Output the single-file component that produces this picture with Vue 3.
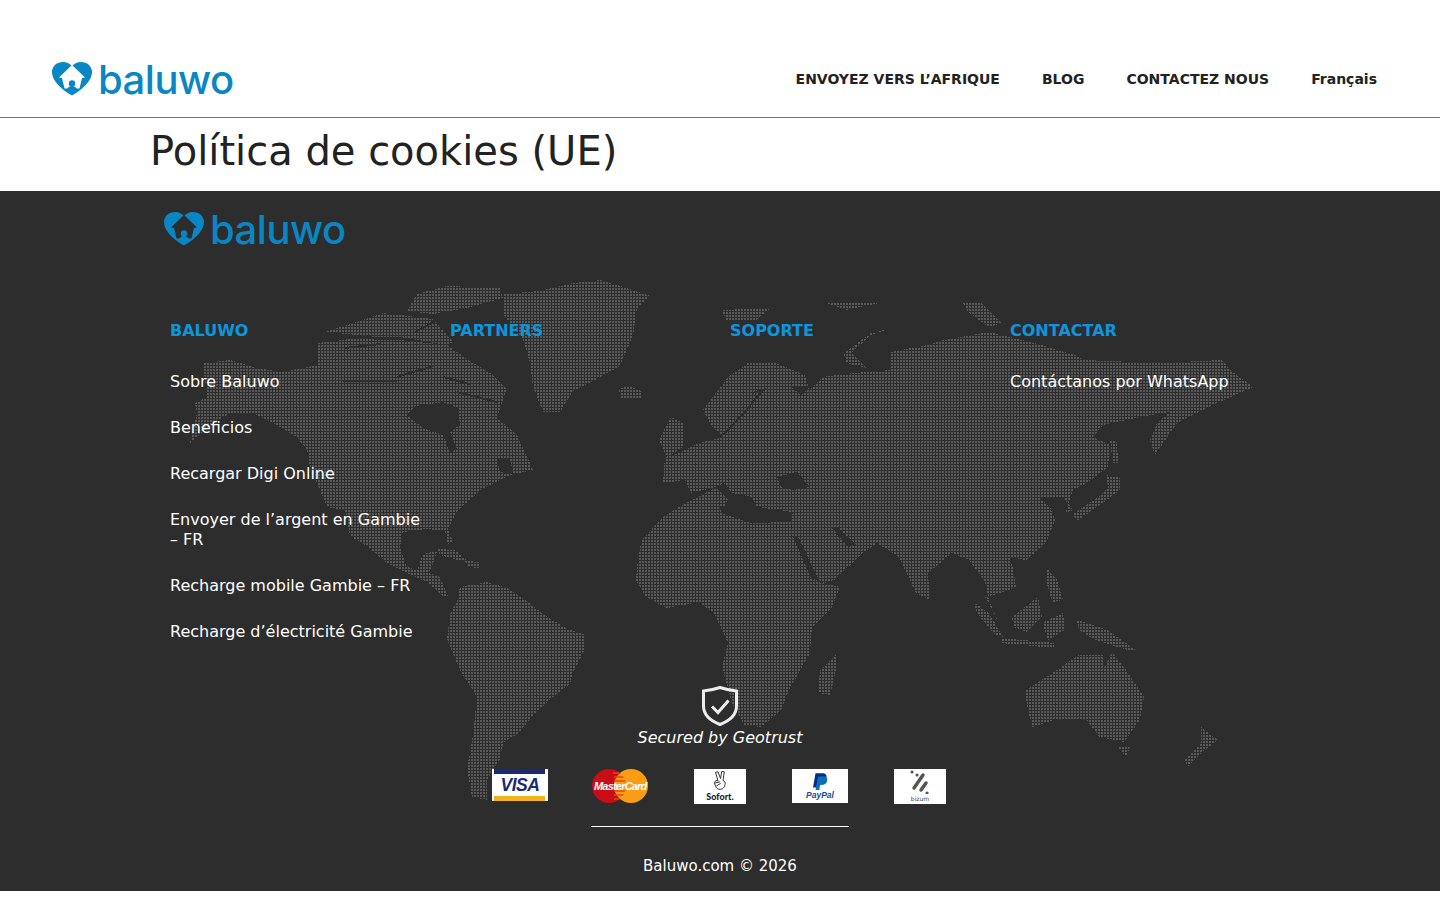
<script setup>
const navLinks = ["ENVOYEZ VERS L’AFRIQUE", "BLOG", "CONTACTEZ NOUS", "Français"];

const columns = [
  {
    title: "BALUWO",
    links: [
      "Sobre Baluwo",
      "Beneficios",
      "Recargar Digi Online",
      "Envoyer de l’argent en Gambie – FR",
      "Recharge mobile Gambie – FR",
      "Recharge d’électricité Gambie",
    ],
  },
  { title: "PARTNERS", links: [] },
  { title: "SOPORTE", links: [] },
  { title: "CONTACTAR", links: ["Contáctanos por WhatsApp"] },
];

// continents, traced in page coordinates from the footer map
const land = [
  // north america
  "203,363 230,360 257,368 283,372 317,365 318,343 350,339 400,340 447,345 470,361 490,373 507,389 497,418 517,435 533,470 513,474 500,480 482,489 457,511 448,529 453,542 448,544 445,531 427,529 403,532 400,546 407,567 417,570 423,554 437,551 432,567 428,573 440,577 448,596 443,596 427,582 407,573 387,563 367,546 350,536 345,510 327,507 310,467 307,450 297,437 273,423 253,413 230,413 213,423 190,443 197,413 195,403 207,397",
  // arctic canada
  "325,332 357,322 383,313 433,319 453,342 447,345 400,337 377,337 357,335",
  "417,294 447,286 500,288 503,298 467,308 433,314 407,311",
  // greenland
  "503,294 540,291 573,283 600,280 627,288 650,296 637,308 633,335 620,366 593,381 573,391 560,412 543,412 533,387 530,363 523,339 503,314",
  // iceland
  "618,389 630,386 643,392 640,399 622,399",
  // caribbean
  "437,549 455,550 470,563 458,560 440,555",
  "466,561 480,562 480,568 468,567",
  // south america
  "460,587 487,582 507,588 527,601 543,614 567,629 585,635 585,649 573,673 570,684 553,697 533,715 520,732 503,743 500,759 487,780 487,800 472,797 467,769 473,735 477,697 460,670 447,639 450,614 457,601",
  // africa
  "638,557 642,540 663,517 679,507 718,503 722,513 752,523 791,522 793,537 806,563 818,582 840,587 832,607 812,627 810,653 789,690 781,710 761,727 744,725 732,703 722,667 728,643 714,613 699,602 667,608 646,597 636,580",
  "836,655 836,670 830,695 818,693 820,670",
  // eurasia
  "663,483 685,480 691,493 679,507 718,505 752,525 793,537 806,563 814,577 824,583 834,580 863,553 877,543 899,557 916,593 930,600 928,573 952,553 969,560 985,582 989,600 1003,633 994,613 985,597 1001,593 1016,587 1014,573 1010,557 1026,560 1046,543 1055,520 1050,507 1038,497 1063,497 1073,510 1065,513 1073,490 1087,483 1108,467 1110,445 1093,437 1103,425 1140,417 1170,412 1157,423 1150,440 1155,455 1177,423 1217,403 1253,387 1230,370 1222,360 1161,363 1083,360 1075,355 1034,343 989,332 944,340 928,345 891,352 891,370 854,373 822,377 810,390 805,375 773,362 748,363 728,377 703,410 712,427 724,437 699,443 679,453 665,457",
  // uk and ireland
  "671,417 683,423 683,447 667,457 659,440",
  // arctic islands
  "722,310 771,308 756,320 726,320",
  "822,302 879,303 846,310",
  "963,303 981,302 1001,323 989,327 969,313",
  "844,353 871,333 893,328 871,335 851,353 867,368 846,363",
  // japan and sakhalin
  "1106,475 1120,478 1120,490 1100,505 1078,520 1072,515 1098,497 1108,487",
  "1110,440 1117,442 1118,463 1113,463",
  // south east asia
  "973,602 989,613 1003,637 995,635 977,613",
  "1001,638 1054,643 1054,648 1001,643",
  "1012,617 1038,597 1042,617 1026,632 1014,627",
  "1042,623 1063,613 1065,630 1048,640",
  "1046,567 1057,580 1063,600 1052,602 1046,580",
  "1077,620 1107,630 1136,650 1128,650 1095,640 1079,630",
  // oceania
  "1026,690 1054,672 1079,655 1103,655 1103,670 1112,652 1126,670 1144,697 1140,720 1124,742 1099,737 1087,720 1054,720 1032,727 1026,700",
  "1118,747 1130,747 1126,757",
  "1201,727 1218,740 1201,753 1187,767 1185,760 1201,743",
];

const water = [
  // hudson bay
  "407,415 415,406 443,402 458,408 460,425 450,432 457,449 450,453 443,435 423,428",
  // gulf of st lawrence
  "497,459 510,458 513,474 500,472",
  // mediterranean
  "679,507 691,493 716,487 728,500 720,513 752,523 791,522 793,512 757,507 752,497 732,493 724,483",
  // black sea
  "777,477 797,472 810,487 793,490 781,487",
  // red sea
  "793,537 798,537 818,578 812,580",
  // persian gulf
  "832,528 838,528 857,545 848,547",
  // white sea
  "791,387 810,387 801,395",
];

const channels = [
  "343,381 397,381",
  "397,377 433,366",
  "345,348 380,344",
  "415,332 450,313",
  "443,377 470,384",
  "457,392 497,402",
  "752,393 763,390 744,413 728,430 720,437",
];
</script>

<template>
  <div class="page">
    <header class="site-header">
      <div class="logo">
        <svg class="logo-mark" viewBox="0 0 40 34" width="40" height="34">
          <path class="heart" d="M20 33.500C14 30 0 21 0 10 0 4 5 0 11 0c4 0 7 2 9 4 2-2 5-4 9-4 6 0 11 4 11 10 0 11-14 20-20 23.500z" />
          <path class="house-light" d="M20 3 7 15.500l3 .5 2.500 10.500h15L30 16l3-.5z" />
          <circle class="heart" cx="20" cy="21.500" r="3.200" />
          <path class="heart" d="M15 28c.5-2.500 2.500-4 5-4s4.500 1.500 5 4l-5 2z" />
        </svg>
        <span class="logo-text">baluwo</span>
      </div>
      <nav class="main-nav">
        <a v-for="link in navLinks" :key="link" href="#">{{ link }}</a>
      </nav>
    </header>

    <section class="page-title">
      <h1>Política de cookies (UE)</h1>
    </section>

    <footer class="site-footer">
      <svg class="world-map" width="1440" height="700" viewBox="0 191 1440 700" aria-hidden="true">
        <defs>
          <pattern id="dots" x="0" y="0" width="3" height="3" patternUnits="userSpaceOnUse">
            <rect width="2" height="2" fill="#595959" />
          </pattern>
          <mask id="land" maskUnits="userSpaceOnUse" x="0" y="191" width="1440" height="700">
            <g shape-rendering="crispEdges">
              <polygon v-for="(pts, i) in land" :key="'l' + i" :points="pts" fill="#fff" />
              <polygon v-for="(pts, i) in water" :key="'w' + i" :points="pts" fill="#000" />
              <polyline v-for="(pts, i) in channels" :key="'c' + i" :points="pts" fill="none" stroke="#000" stroke-width="2" />
            </g>
          </mask>
        </defs>
        <rect x="0" y="191" width="1440" height="700" fill="url(#dots)" mask="url(#land)" />
      </svg>

      <div class="footer-inner">
        <div class="logo footer-logo">
          <svg class="logo-mark" viewBox="0 0 40 34" width="40" height="34">
            <path class="heart" d="M20 33.500C14 30 0 21 0 10 0 4 5 0 11 0c4 0 7 2 9 4 2-2 5-4 9-4 6 0 11 4 11 10 0 11-14 20-20 23.500z" />
            <path class="house-dark" d="M20 3 7 15.500l3 .5 2.500 10.500h15L30 16l3-.5z" />
            <circle class="heart" cx="20" cy="21.500" r="3.200" />
            <path class="heart" d="M15 28c.5-2.500 2.500-4 5-4s4.500 1.500 5 4l-5 2z" />
          </svg>
          <span class="logo-text">baluwo</span>
        </div>

        <div class="footer-columns">
          <div v-for="col in columns" :key="col.title" class="footer-col">
            <h4>{{ col.title }}</h4>
            <a v-for="link in col.links" :key="link" href="#">{{ link }}</a>
          </div>
        </div>

        <div class="secured">
          <svg viewBox="0 0 36 40" width="36" height="40">
            <path d="M18 1.500c6 2 12 3 16.500 3.500v15c0 9-7.500 15-16.500 18.500C9 35 1.500 29 1.500 20V5C6 4.500 12 3.500 18 1.500z" fill="none" stroke="#eee" stroke-width="3" />
            <path d="M10 20.500l6 6 10.500-12" fill="none" stroke="#eee" stroke-width="3" />
          </svg>
          <em>Secured by Geotrust</em>
        </div>

        <div class="payments">
          <div class="pay visa">
            <span>VISA</span>
          </div>
          <div class="pay mastercard">
            <svg viewBox="0 0 56 34" width="56" height="34">
              <defs>
                <clipPath id="mc-overlap">
                  <circle cx="17" cy="17" r="17" />
                </clipPath>
              </defs>
              <circle cx="17" cy="17" r="17" fill="#c90d14" />
              <circle cx="39" cy="17" r="17" fill="#fb9d14" />
              <g clip-path="url(#mc-overlap)" stroke="#e5440f" stroke-width="1.600">
                <path d="M21 4h14M22 8h12M22 12h12M22 22h12M22 26h12M22 30h12" />
              </g>
            </svg>
            <span>MasterCard</span>
          </div>
          <div class="pay sofort">
            <svg viewBox="0 0 20 24" width="17" height="20">
              <path d="M7 12 4 1.500 7 1l3 8 1.500-8.500 3 .5-1.500 10.500c2 .5 3 2 2.500 4.500-.5 3-2.500 6-5.500 6-3 .4-5-1.500-6-4-.5-1.500-1.500-3-1-4.500S5.500 10.500 7 12z" fill="#fff" stroke="#222" stroke-width="1.100" />
              <path d="M3.500 14.500l6-1.500M5 18l5-3" fill="none" stroke="#222" stroke-width="1.100" />
            </svg>
            <span>Sofort.</span>
          </div>
          <div class="pay paypal">
            <svg viewBox="0 0 18 21" width="15" height="18">
              <path d="M3 0h8c4 0 6 2 5 6-1 4-4 6-8 6H6l-1 5H0z" fill="#003087" />
              <path d="M6 4h7c3 0 5 1.500 4 5-1 4-3.500 5-7 5H8.500l-1 6H3z" fill="#0a70ba" />
            </svg>
            <span>PayPal</span>
          </div>
          <div class="pay bizum">
            <svg viewBox="0 0 22 24" width="22" height="24">
              <path d="M3 2h.1M8 5h.1M18 23h.1" stroke="#555" stroke-width="3" stroke-linecap="round" />
              <path d="M14 5 5 18M17 13l-5 7" stroke="#555" stroke-width="3.500" stroke-linecap="round" />
            </svg>
            <span>bizum</span>
          </div>
        </div>

        <hr class="divider" />
        <p class="copyright">Baluwo.com © 2026</p>
      </div>
    </footer>
  </div>
</template>

<style scoped>
.page {
  font-family: "DejaVu Sans", sans-serif;
  color: #222;
}
.site-header {
  height: 55px;
  border-bottom: 1px solid #00a0d2;
  display: flex;
  justify-content: space-between;
  padding: 62px 63px 0 52px;
}
.logo {
  display: flex;
  align-items: flex-start;
  gap: 6px;
  height: 34px;
}
.logo-mark {
  display: block;
  flex: none;
}
.heart {
  fill: #0a86c5;
}
.house-light {
  fill: #fff;
}
.house-dark {
  fill: #2d2d2d;
}
.logo-text {
  font-family: Inter, sans-serif;
  font-size: 40px;
  font-weight: 500;
  line-height: 36px;
  color: #0a86c5;
  letter-spacing: -0.5px;
}
.main-nav {
  display: flex;
  gap: 42px;
  padding-top: 7px;
}
.main-nav a {
  font-size: 14px;
  font-weight: 700;
  line-height: 20px;
  color: #222;
  text-decoration: none;
}
.page-title {
  height: 73px;
  padding-left: 150px;
}
.page-title h1 {
  margin: 0;
  font-size: 40px;
  font-weight: 400;
  line-height: 66px;
  color: #222;
}
.site-footer {
  position: relative;
  height: 700px;
  background: #2d2d2d;
  color: #fff;
  overflow: hidden;
}
.world-map {
  position: absolute;
  top: 0;
  left: 0;
}
.footer-inner {
  position: relative;
  padding: 21px 150px 0;
}
.footer-logo {
  margin-left: 14px;
}
.footer-columns {
  display: grid;
  grid-template-columns: repeat(4, 260px);
  gap: 20px;
  margin: 75px 0 0 20px;
  height: 365px;
}
.footer-col {
  display: flex;
  flex-direction: column;
  align-items: flex-start;
}
.footer-col h4 {
  margin: 0 0 31px;
  font-size: 16px;
  font-weight: 700;
  line-height: 20px;
  color: #0d96dd;
}
.footer-col a {
  font-size: 16px;
  line-height: 20px;
  margin-bottom: 26px;
  color: #fff;
  text-decoration: none;
}
.secured {
  display: flex;
  flex-direction: column;
  align-items: center;
}
.secured svg {
  display: block;
}
.secured em {
  margin-top: 2px;
  font-size: 16px;
  line-height: 20px;
  color: #fff;
}
.payments {
  display: flex;
  justify-content: center;
  gap: 46px;
  margin-top: 21px;
  height: 35px;
  padding-right: 2px;
}
.pay {
  position: relative;
  display: flex;
  flex-direction: column;
  align-items: center;
  background: #fff;
  box-sizing: border-box;
}
.visa {
  width: 56px;
  height: 32px;
  margin-right: -2px;
  justify-content: center;
}
.visa::before,
.visa::after {
  content: "";
  position: absolute;
  left: 2px;
  right: 3px;
  height: 5px;
}
.visa::before {
  top: 0;
  background: #1a2a75;
}
.visa::after {
  bottom: 0;
  background: #f0b41c;
}
.visa span {
  font-family: "Liberation Sans", sans-serif;
  font-size: 17.500px;
  font-weight: 700;
  font-style: italic;
  color: #1a2a75;
  line-height: 20px;
  letter-spacing: -0.5px;
}
.mastercard {
  width: 56px;
  height: 34px;
  background: none;
}
.mastercard svg {
  display: block;
}
.mastercard span {
  position: absolute;
  top: 10px;
  left: 2px;
  font-family: "Liberation Sans", sans-serif;
  font-size: 11px;
  font-weight: 700;
  font-style: italic;
  line-height: 14px;
  letter-spacing: -0.8px;
  color: #fff;
  white-space: nowrap;
}
.sofort {
  width: 52px;
  height: 35px;
  padding-top: 2px;
}
.sofort span {
  font-family: Lato, sans-serif;
  font-size: 9px;
  font-weight: 900;
  line-height: 10px;
  color: #222;
  margin-top: 1px;
}
.paypal {
  width: 56px;
  height: 34px;
  padding-top: 4px;
}
.paypal span {
  font-family: "Liberation Sans", sans-serif;
  font-size: 8.500px;
  font-weight: 700;
  font-style: italic;
  line-height: 9px;
  color: #1a4a9c;
}
.bizum {
  width: 52px;
  height: 35px;
  padding-top: 1px;
}
.bizum span {
  font-size: 6px;
  line-height: 8px;
  color: #444;
  margin-top: 1px;
}
.divider {
  width: 258px;
  height: 1px;
  margin: 22px auto 0;
  border: 0;
  background: #fff;
}
.copyright {
  margin: 29px 0 0;
  font-size: 15px;
  line-height: 20px;
  text-align: center;
  color: #fff;
}
</style>
